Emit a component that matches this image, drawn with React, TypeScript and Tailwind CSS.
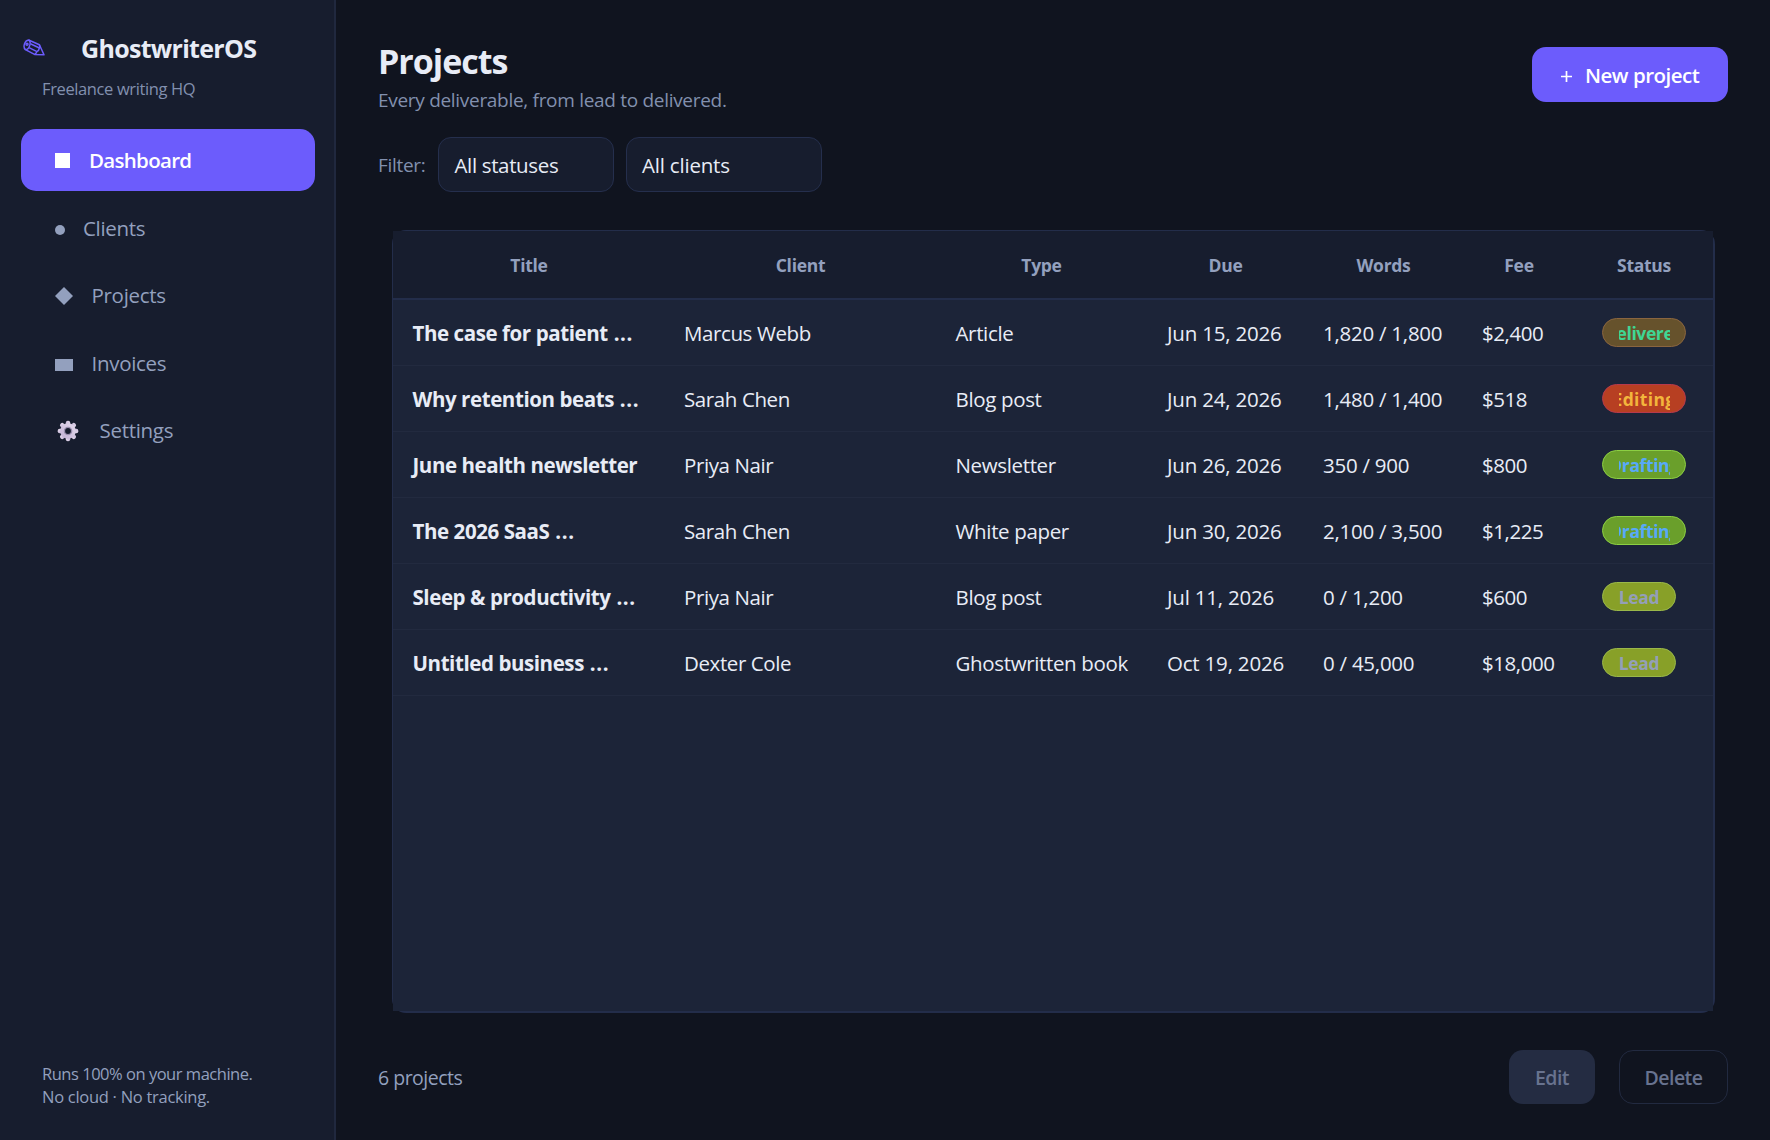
import * as React from 'react';
import { clsx } from 'clsx';

interface NavItem {
  id: string;
  label: string;
  icon: React.ReactNode;
  gap: string;
}

interface Project {
  title: string;
  truncated?: boolean;
  client: string;
  type: string;
  due: string;
  words: string;
  fee: string;
  status: keyof typeof statusStyles;
}

const statusStyles = {
  Delivered: 'w-[84px] border-[#8a653f] bg-[#66522c] text-[#3fd694]',
  Editing: 'w-[84px] border-[#b53a4c] bg-[#b73f22] text-[#f3b53c] tracking-[0.35px]',
  Drafting: 'w-[84px] border-[#8ccf43] bg-[#6a9f2b] text-[#57a9f8]',
  Lead: 'w-[74px] border-[#9ab84a] bg-[#88a028] text-[#949fb8]',
};

const columns = ['Title', 'Client', 'Type', 'Due', 'Words', 'Fee', 'Status'];

const projects: Project[] = [
  { title: 'The case for patient', truncated: true, client: 'Marcus Webb', type: 'Article', due: 'Jun 15, 2026', words: '1,820 / 1,800', fee: '$2,400', status: 'Delivered' },
  { title: 'Why retention beats', truncated: true, client: 'Sarah Chen', type: 'Blog post', due: 'Jun 24, 2026', words: '1,480 / 1,400', fee: '$518', status: 'Editing' },
  { title: 'June health newsletter', client: 'Priya Nair', type: 'Newsletter', due: 'Jun 26, 2026', words: '350 / 900', fee: '$800', status: 'Drafting' },
  { title: 'The 2026 SaaS', truncated: true, client: 'Sarah Chen', type: 'White paper', due: 'Jun 30, 2026', words: '2,100 / 3,500', fee: '$1,225', status: 'Drafting' },
  { title: 'Sleep & productivity', truncated: true, client: 'Priya Nair', type: 'Blog post', due: 'Jul 11, 2026', words: '0 / 1,200', fee: '$600', status: 'Lead' },
  { title: 'Untitled business', truncated: true, client: 'Dexter Cole', type: 'Ghostwritten book', due: 'Oct 19, 2026', words: '0 / 45,000', fee: '$18,000', status: 'Lead' },
];

const gridCols = 'grid grid-cols-[272px_271px_211px_157px_159px_112px_138px]';

function PencilIcon() {
  return (
    <svg width="22" height="18" viewBox="0 0 22 18" fill="none" stroke="#6c5cfc" strokeWidth="1.5" strokeLinejoin="round">
      <path d="M5.6 1 L16.4 5.8 L21 15.8 L11.5 15.4 L2.4 10.6 C-0.4 8 1.6 1.4 5.6 1 Z" />
      <path d="M5.6 1 C8.8 3 6.4 10.8 2.4 10.6" />
      <path d="M7.4 4.8 L16.4 9 M6 8.6 L14 12.6" />
      <path d="M16.4 5.8 C17 7.4 16.8 8.4 16.4 9 C16 11 15 12.2 14 12.6 C13.4 14.2 12.6 15 11.5 15.4" />
      <circle cx="4" cy="5.2" r="1" />
    </svg>
  );
}

function GearIcon() {
  return (
    <svg width="22" height="22" viewBox="-11 -11 22 22">
      <defs>
        <linearGradient id="gear" x1="1" y1="0" x2="0" y2="1">
          <stop offset="0" stopColor="#e6dcee" />
          <stop offset="1" stopColor="#bfaed2" />
        </linearGradient>
      </defs>
      <g fill="url(#gear)">
        {[0, 45, 90, 135, 180, 225, 270, 315].map(angle => (
          <rect key={angle} x="-2.2" y="-10.3" width="4.4" height="6" rx="2" transform={`rotate(${angle})`} />
        ))}
        <circle r="7.8" />
      </g>
      <circle r="3.6" fill="#171d2e" stroke="#9a8fae" strokeWidth="1.4" />
    </svg>
  );
}

const navItems: NavItem[] = [
  { id: 'dashboard', label: 'Dashboard', gap: 'gap-[19px]', icon: <span className="size-[15px] bg-white" /> },
  { id: 'clients', label: 'Clients', gap: 'gap-[18px]', icon: <span className="size-[10px] mt-1 rounded-full bg-[#93a0be]" /> },
  {
    id: 'projects',
    label: 'Projects',
    gap: 'gap-[18.5px]',
    icon: (
      <svg width="18" height="18" viewBox="0 0 18 18" fill="#93a0be">
        <path d="M9 0 L18 9 L9 18 L0 9 Z" />
      </svg>
    ),
  },
  { id: 'invoices', label: 'Invoices', gap: 'gap-[18.5px]', icon: <span className="w-[18px] h-[12px] mt-[3px] bg-[#93a0be]" /> },
  { id: 'settings', label: 'Settings', gap: 'gap-[21px]', icon: <span className="pl-[1.5px]"><GearIcon /></span> },
];

function Sidebar({ active }: { active: string }) {
  return (
    <aside className="w-[336px] shrink-0 flex flex-col border-r-2 border-[#20283e] bg-[#171d2e] pl-[21px] pr-[19px]">
      <div className="flex items-center h-[42px] mt-[28px] pl-0.5">
        <div className="-mt-0.5">
          <PencilIcon />
        </div>
        <span className="ml-[36px] text-[25px] font-bold tracking-[-0.7px] text-[#e8ecf6]">GhostwriterOS</span>
      </div>
      <p className="mt-[6px] pl-[21px] text-[16.5px] leading-[26px] tracking-[-0.38px] text-[#8290ae]">Freelance writing HQ</p>
      <nav className="mt-[27px] flex flex-col gap-[6px]">
        {navItems.map(item => (
          <button
            key={item.id}
            className={clsx(
              'h-[61.5px] w-full flex items-center rounded-[15px] pl-[34px] pt-[2px] text-[20.5px]',
              item.gap,
              item.id === active ? 'bg-[#6c5cfc] text-white font-semibold tracking-[-0.7px]' : 'text-[#93a0be] tracking-[-0.3px]'
            )}
          >
            {item.icon}
            <span>{item.label}</span>
          </button>
        ))}
      </nav>
      <p className="mt-auto mb-[32px] pl-[21px] text-[16.5px] leading-[23px] text-[#93a0be]">
        <span className="tracking-[-0.48px]">Runs 100% on your machine.</span>
        <br />
        <span className="tracking-[-0.28px]">No cloud · No tracking.</span>
      </p>
    </aside>
  );
}

function StatusPill({ status }: { status: Project['status'] }) {
  return (
    <span className={clsx('h-[28.5px] flex items-center rounded-full border-[1.5px] px-[15.5px] text-[17.5px] font-bold', statusStyles[status])}>
      <span className="w-full flex justify-center overflow-hidden whitespace-nowrap leading-[24px] pt-px">
        <span className="shrink-0">{status}</span>
      </span>
    </span>
  );
}

function ProjectTable() {
  return (
    <div className="mx-[13px] h-[783px] flex flex-col rounded-[14px] border-t border-l border-r-2 border-b-2 border-[#232d4a]">
      <div className={clsx(gridCols, 'h-[69px] shrink-0 border-b-2 border-[#232d4a] bg-[#171d2e]')}>
        {columns.map(column => (
          <div key={column} className="flex items-center justify-center pt-[1.5px] text-[17.5px] font-bold tracking-[-0.3px] text-[#93a0be]">
            {column}
          </div>
        ))}
      </div>
      <div className="flex-1 bg-[#1c2438]">
        {projects.map(project => (
          <div key={project.title} className={clsx(gridCols, 'h-[66px] items-center border-b border-[#222a3f] text-[20.5px] leading-[30px] tracking-[-0.4px] text-[#e8ecf6] whitespace-nowrap')}>
            <div className="pl-[19.5px] font-bold tracking-[-0.42px]">
              {project.title}
              {project.truncated && <span className="tracking-[0.6px]"> ...</span>}
            </div>
            <div className="pl-[19px]">{project.client}</div>
            <div className="pl-[19.5px] tracking-[-0.35px]">{project.type}</div>
            <div className="pl-5 tracking-[-0.2px]">{project.due}</div>
            <div className="pl-[19px] tracking-[-0.25px]">{project.words}</div>
            <div className="pl-[19px] tracking-[-0.45px]">{project.fee}</div>
            <div className="pl-[27px]">
              <StatusPill status={project.status} />
            </div>
          </div>
        ))}
      </div>
    </div>
  );
}

export default function App() {
  return (
    <div className="w-[1770px] h-[1140px] flex overflow-hidden bg-[#10141f] font-['Open_Sans','Noto_Sans',sans-serif]">
      <Sidebar active="dashboard" />
      <main className="flex-1 flex flex-col pl-[43px] pr-[42px]">
        <header className="flex items-start justify-between pt-[37px]">
          <div className="-ml-px">
            <h1 className="text-[34px] leading-[48px] font-bold tracking-[-1px] text-[#e8ecf6]">Projects</h1>
            <p className="pt-px text-[19px] leading-[28px] tracking-[-0.3px] text-[#8290ae]">Every deliverable, from lead to delivered.</p>
          </div>
          <button className="mt-[10px] w-[196px] h-[55px] flex items-center rounded-[14px] bg-[#6c5cfc] pl-[29px] pt-[2px] gap-[13px] text-[20.5px] font-semibold tracking-[-0.5px] text-white">
            <svg width="11" height="11" viewBox="0 0 11 11" stroke="currentColor" strokeWidth="1.7" className="mt-0.5">
              <path d="M5.5 0 V11 M0 5.5 H11" />
            </svg>
            New project
          </button>
        </header>
        <div className="mt-[23px] flex items-center h-[55px]">
          <span className="-ml-px w-[60px] pt-px text-[19px] tracking-[-0.3px] text-[#8290ae]">Filter:</span>
          <button className="w-[176px] h-full rounded-[13px] border-[1.5px] border-[#252f4d] bg-[#171d2e] pl-[15.5px] pt-[2px] text-left text-[20.5px] tracking-[-0.35px] text-[#e8ecf6]">All statuses</button>
          <button className="ml-3 w-[196px] h-full rounded-[13px] border-[1.5px] border-[#252f4d] bg-[#171d2e] pl-[15px] pt-[2px] text-left text-[20.5px] tracking-[-0.2px] text-[#e8ecf6]">All clients</button>
        </div>
        <div className="mt-[38px]">
          <ProjectTable />
        </div>
        <footer className="mt-[37px] flex items-center h-[54px] text-[19.5px]">
          <span className="-ml-px flex-1 pt-[2px] tracking-[-0.5px] text-[#93a0be]">6 projects</span>
          <button className="w-[86px] h-full pt-[2px] rounded-[14px] bg-[#242c42] font-semibold tracking-[-0.5px] text-[#68738f]">Edit</button>
          <button className="ml-6 w-[109px] h-full pt-[2px] rounded-[14px] border-[1.5px] border-[#222a40] font-semibold tracking-[-0.5px] text-[#68738f]">Delete</button>
        </footer>
      </main>
    </div>
  );
}
